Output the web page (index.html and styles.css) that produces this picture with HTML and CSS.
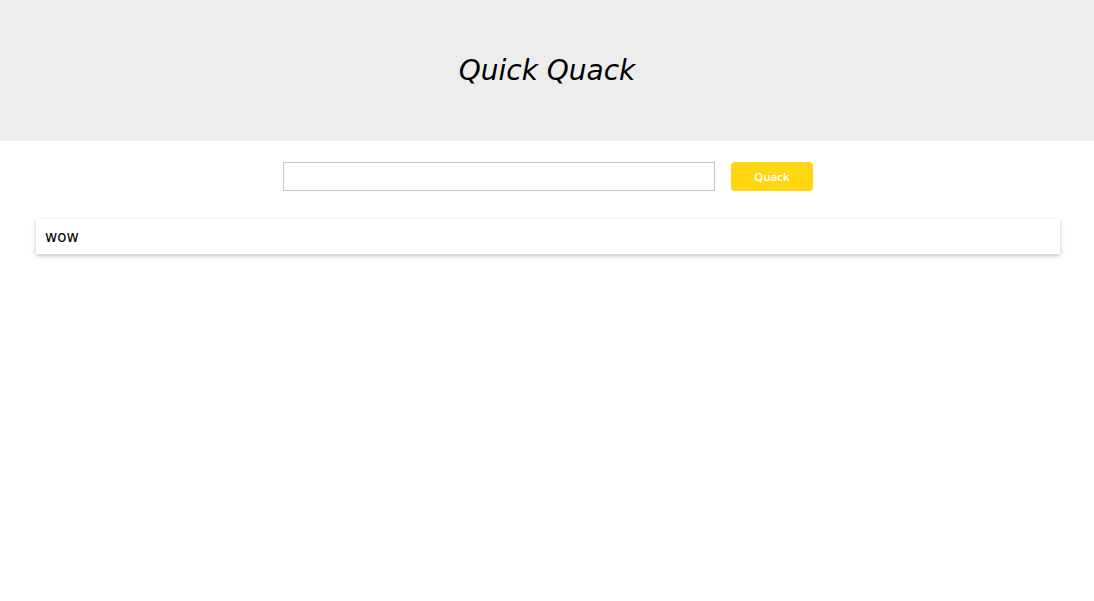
FILE: index.html
```html
<!DOCTYPE html>
<html>
<head>
<meta charset="utf-8">
<link rel="stylesheet" href="styles.css">
</head>
<body>
<header class="header">
  <h1 class="title">Quick Quack</h1>
</header>
<main class="main">
  <form class="search">
    <input class="search-input" type="text">
    <button class="search-button" type="button">Quack</button>
  </form>
  <ul class="results">
    <li class="result">wow</li>
  </ul>
</main>
</body>
</html>
```
FILE: styles.css
```css
html, body {
  margin: 0;
  padding: 0;
  background: #ffffff;
  font-family: "DejaVu Sans", Verdana, sans-serif;
}
body {
  min-height: 601px;
}
.header {
  height: 141px;
  background: #ededed;
  display: flex;
  align-items: center;
  justify-content: center;
}
.title {
  margin: 0;
  font-size: 28px;
  font-weight: normal;
  font-style: italic;
  color: #000;
  padding-bottom: 1px;
}
.main {
  padding: 21px 34px 40px 36px;
}
.search {
  display: flex;
  justify-content: center;
  gap: 16px;
  margin: 0;
}
.search-input {
  box-sizing: border-box;
  width: 432px;
  height: 29px;
  border: 1px solid #c8c8c8;
  margin: 0;
  padding: 0 6px;
}
.search-button {
  box-sizing: border-box;
  width: 82px;
  height: 29px;
  border: none;
  border-radius: 4px;
  background: #ffd60f;
  color: #fff;
  font-family: "Open Sans", sans-serif;
  font-weight: 600;
  font-size: 11.5px;
  margin: 0;
}
.results {
  list-style: none;
  margin: 28px 0 0 0;
  padding: 0;
}
.result {
  height: 35px;
  box-sizing: border-box;
  padding: 0 9px;
  display: flex;
  align-items: center;
  background: #fff;
  box-shadow: 0 2px 5px rgba(0,0,0,0.22);
  font-family: "DejaVu Sans", Verdana, sans-serif;
  font-weight: normal;
  font-size: 15px;
  color: #000;
}
```
